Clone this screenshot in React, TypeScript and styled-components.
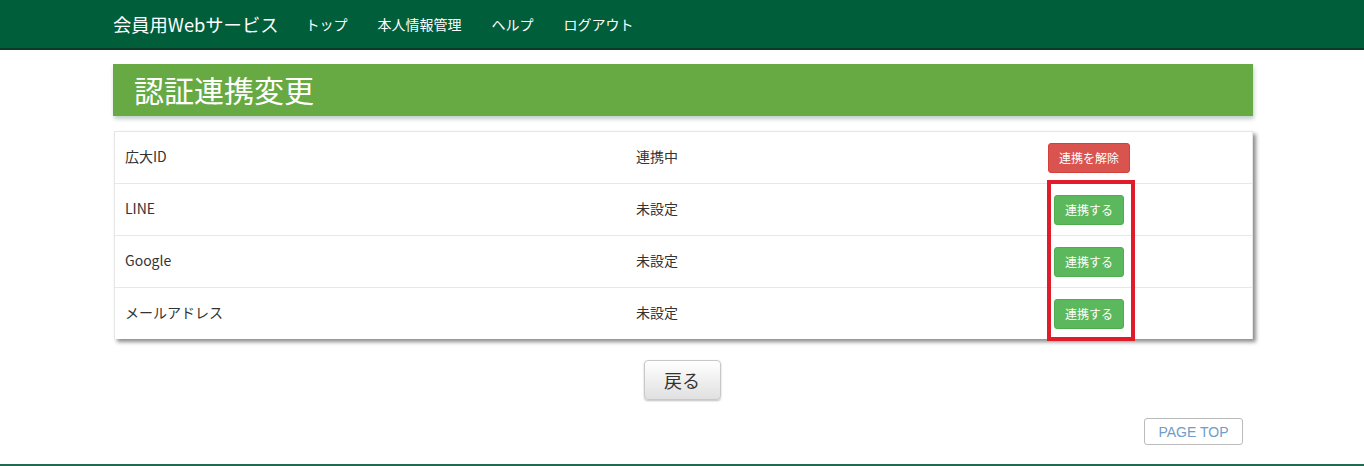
import React from "react";
import styled, { createGlobalStyle } from "styled-components";

const Global = createGlobalStyle`
  html, body { margin: 0; padding: 0; background: #fff; }
  body {
    font-family: "Noto Sans CJK JP", "Noto Sans", "Liberation Sans", sans-serif;
    color: #333;
    font-size: 14px;
  }
  * { box-sizing: border-box; }
`;

const Header = styled.header`
  height: 50px;
  background: #005e3b;
  border-bottom: 2px solid #0b3b27;
`;

const Container = styled.div`
  width: 1140px;
  margin: 0 auto;
  position: relative;
  left: 1px;
`;

const NavBar = styled(Container)`
  display: flex;
  align-items: center;
  height: 47px;
`;

const Brand = styled.a`
  color: #fff;
  font-size: 18.3px;
  letter-spacing: 0;
  text-decoration: none;
  margin-right: 12px;
`;

const NavLink = styled.a`
  color: #fff;
  font-size: 14px;
  padding: 0 15px;
  letter-spacing: 0;
  text-decoration: none;
`;

const Main = styled(Container)`
  padding-top: 14px;
  display: flex;
  flex-direction: column;
`;

const TitleBar = styled.h1`
  margin: 0;
  height: 52px;
  background: #67aa44;
  color: #fff;
  font-weight: 400;
  font-size: 30px;
  line-height: 50px;
  padding-left: 21px;
  box-shadow: 1px 3px 4px rgba(20, 90, 70, 0.28);
`;

const Table = styled.div`
  position: relative;
  margin-top: 15px;
  margin-left: 1px;
  border: 1px solid #e6e6e6;
  border-bottom: none;
  box-shadow: 3px 3px 4px rgba(0, 0, 0, 0.45);
  background: #fff;
`;

const Row = styled.div`
  display: grid;
  grid-template-columns: 511px 299px 1fr;
  align-items: center;
  height: 52px;
  border-top: 1px solid #e8e8e8;
  &:first-child { border-top: none; height: 51px; }
`;

const Cell = styled.div`
  padding-left: 10px;
  padding-bottom: 4px;
  font-size: 14px;
  color: #333;
`;

const ActionCell = styled.div`
  display: flex;
  justify-content: center;
  padding-left: 1px;
`;

const SmallButton = styled.button<{ $variant: "danger" | "success" }>`
  font-family: inherit;
  font-size: 12px;
  line-height: 18px;
  padding: 5px 10px;
  height: 30px;
  border-radius: 3px;
  color: #fff;
  border: 1px solid ${(p) => (p.$variant === "danger" ? "#d43f3a" : "#4cae4c")};
  background: ${(p) => (p.$variant === "danger" ? "#d9534f" : "#5cb85c")};
`;

const Highlight = styled.div`
  position: absolute;
  left: 932px;
  top: 48px;
  width: 88px;
  height: 161px;
  border: 4px solid #e01b2a;
  pointer-events: none;
`;

const BackWrap = styled.div`
  display: flex;
  justify-content: center;
  margin-top: 21px;
`;

const BackButton = styled.button`
  width: 77px;
  height: 40px;
  font-family: inherit;
  font-size: 18px;
  color: #333;
  border: 1px solid #c8c8c8;
  border-radius: 4px;
  background: linear-gradient(#ffffff, #e0e0e0);
  box-shadow: 0 1px 2px rgba(0, 0, 0, 0.25);
  position: relative;
  left: -1px;
`;

const PageTopWrap = styled.div`
  display: flex;
  justify-content: flex-end;
  padding-right: 10px;
  margin-top: 18px;
`;

const PageTop = styled.a`
  width: 99px;
  height: 27px;
  display: flex;
  align-items: center;
  justify-content: center;
  border: 1px solid #bbb;
  border-radius: 3px;
  color: #6f9cc8;
  font-family: "Liberation Sans", "Noto Sans", sans-serif;
  font-size: 14px;
`;

const FooterLine = styled.div`
  margin-top: 19px;
  height: 4px;
  background: #1f6a50;
`;

const rows = [
  { name: "広大ID", status: "連携中", linked: true },
  { name: "LINE", status: "未設定", linked: false },
  { name: "Google", status: "未設定", linked: false },
  { name: "メールアドレス", status: "未設定", linked: false },
];

export default function App() {
  return (
    <>
      <Global />
      <Header>
        <NavBar>
          <Brand>会員用Webサービス</Brand>
          <NavLink>トップ</NavLink>
          <NavLink>本人情報管理</NavLink>
          <NavLink>ヘルプ</NavLink>
          <NavLink>ログアウト</NavLink>
        </NavBar>
      </Header>
      <Main>
        <TitleBar>認証連携変更</TitleBar>
        <Table>
          {rows.map((r) => (
            <Row key={r.name}>
              <Cell>{r.name}</Cell>
              <Cell>{r.status}</Cell>
              <ActionCell>
                {r.linked ? (
                  <SmallButton $variant="danger">連携を解除</SmallButton>
                ) : (
                  <SmallButton $variant="success">連携する</SmallButton>
                )}
              </ActionCell>
            </Row>
          ))}
          <Highlight />
        </Table>
        <BackWrap>
          <BackButton>戻る</BackButton>
        </BackWrap>
        <PageTopWrap>
          <PageTop>PAGE TOP</PageTop>
        </PageTopWrap>
      </Main>
      <FooterLine />
    </>
  );
}
